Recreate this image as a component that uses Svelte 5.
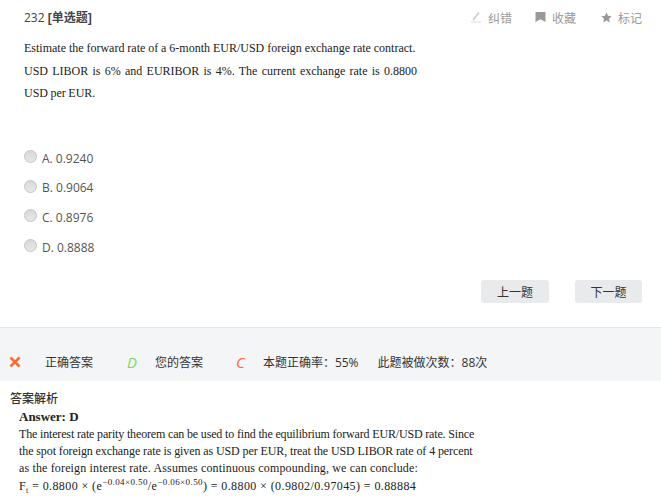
<script>
	const options = ['A. 0.9240', 'B. 0.9064', 'C. 0.8976', 'D. 0.8888'];
</script>

<div class="page">
	<div class="head">
		<div class="qno">232 <b>[单选题]</b></div>
		<div class="tools">
			<span class="tool">
				<svg width="12" height="12" viewBox="0 0 12 12"><path d="M1 11h10" stroke="#ddd" stroke-width="1"/><path d="M3 9l6-7.5" stroke="#ccc" stroke-width="1.6"/></svg>
				纠错
			</span>
			<span class="tool">
				<svg width="11" height="12" viewBox="0 0 11 12"><path d="M0.5 1h10v10L5.5 8.2 0.5 11z" fill="#999"/></svg>
				收藏
			</span>
			<span class="tool">
				<svg width="11" height="11" viewBox="0 0 24 24"><path d="M12 1l3.4 7.3 7.9 1-5.8 5.5 1.5 7.9L12 18.8l-7 3.9 1.5-7.9L.7 9.3l7.9-1z" fill="#999"/></svg>
				标记
			</span>
		</div>
	</div>

	<div class="stem">
		<div class="s1">Estimate the forward rate of a 6-month EUR/USD foreign exchange rate contract.</div>
		<div class="s2">USD LIBOR is 6% and EURIBOR is 4%. The current exchange rate is 0.8800</div>
		<div class="s3">USD per EUR.</div>
	</div>

	<ul class="options">
		{#each options as opt}
			<li><span class="radio"></span>{opt}</li>
		{/each}
	</ul>

	<div class="nav">
		<button type="button">上一题</button>
		<button type="button">下一题</button>
	</div>

	<div class="result">
		<svg class="cross" width="12" height="12" viewBox="0 0 12 12"><path d="M1.5 1.5l9 9M10.5 1.5l-9 9" stroke="#ff6a33" stroke-width="2.6"/></svg>
		<span class="l1">正确答案</span>
		<i class="right">D</i>
		<span class="l2">您的答案</span>
		<i class="wrong">C</i>
		<span class="l3">本题正确率：55%</span>
		<span class="l4">此题被做次数：88次</span>
	</div>

	<div class="analysis">
		<h4>答案解析</h4>
		<div class="body">
			<div class="answer">Answer: D</div>
			<div class="b1">The interest rate parity theorem can be used to find the equilibrium forward EUR/USD rate. Since</div>
			<div class="b2">the spot foreign exchange rate is given as USD per EUR, treat the USD LIBOR rate of 4 percent</div>
			<div class="b3">as the foreign interest rate. Assumes continuous compounding, we can conclude:</div>
			<div class="formula">F<sub>t</sub> = 0.8800 × (e<sup>−0.04×0.50</sup>/e<sup>−0.06×0.50</sup>) = 0.8800 × (0.9802/0.97045) = 0.88884</div>
		</div>
	</div>
</div>

<style>
	:global(body) {
		margin: 0;
		background: #fff;
		overflow: hidden;
	}

	.page {
		width: 661px;
		height: 502px;
		overflow: hidden;
		font-family: 'Liberation Sans', 'Noto Sans CJK SC', sans-serif;
		color: #333;
		font-size: 12px;
	}

	.head {
		display: flex;
		justify-content: space-between;
		align-items: center;
		height: 20px;
		padding: 7px 19px 0 24px;
	}

	.qno {
		font-family: 'Open Sans', 'Noto Sans CJK SC', sans-serif;
		color: #444;
	}

	.qno b {
		font-family: 'Liberation Sans', 'Noto Sans CJK SC', sans-serif;
		font-weight: bold;
	}

	.tools {
		display: flex;
		gap: 23px;
		color: #999;
	}

	.tool {
		display: flex;
		align-items: center;
		gap: 6px;
	}

	.tool:last-child {
		margin-left: 2px;
	}

	.stem {
		margin: 10px 0 0 24px;
		font-family: 'Liberation Serif', serif;
		font-size: 12px;
		line-height: 22.5px;
		color: #222;
		white-space: nowrap;
	}

	.s1 {
		word-spacing: -0.1px;
	}

	.s2 {
		word-spacing: 1.25px;
	}

	.s3 {
		word-spacing: -0.5px;
	}

	.options {
		list-style: none;
		margin: 39px 0 0;
		padding: 0 0 0 24px;
		font-family: 'Open Sans', 'Noto Sans CJK SC', sans-serif;
		color: #555;
	}

	.options li {
		display: flex;
		align-items: center;
		height: 29.6px;
	}

	.radio {
		width: 11px;
		height: 11px;
		margin: -3px 5px 0 0;
		border-radius: 50%;
		border: 1px solid #c4c4c4;
		background: linear-gradient(#d8d8d8, #e8e8e8);
	}

	.nav {
		display: flex;
		justify-content: flex-end;
		gap: 26px;
		margin-top: 18px;
		padding-right: 19px;
	}

	.nav button {
		width: 68px;
		height: 23px;
		padding: 0;
		border: 0;
		border-radius: 3px;
		background: #e9eaec;
		color: #333;
		font: inherit;
	}

	.nav button:last-child {
		width: 67px;
	}

	.result {
		display: flex;
		align-items: center;
		height: 37px;
		margin-top: 24px;
		padding: 16px 0 0 9px;
		border-top: 1px solid #e5e5e5;
		background: #f4f5f7;
		white-space: nowrap;
		font-family: 'Open Sans', 'Noto Sans CJK SC', sans-serif;
	}

	.result i {
		font-size: 15px;
	}

	.l1 {
		margin-left: 24px;
	}

	.right {
		margin-left: 34px;
		color: #7ed957;
	}

	.l2 {
		margin-left: 18px;
	}

	.wrong {
		margin-left: 33px;
		color: #ff6a33;
	}

	.l3 {
		margin-left: 18px;
	}

	.l4 {
		margin-left: 19px;
	}

	.analysis {
		padding: 10px 0 0 10px;
	}

	h4 {
		margin: 0;
		font-size: 12px;
		font-weight: 500;
		line-height: 17px;
	}

	.body {
		padding-left: 9px;
		font-family: 'Liberation Serif', serif;
		font-size: 12px;
		line-height: 17.3px;
		color: #222;
		white-space: nowrap;
	}

	.answer {
		font-size: 13px;
		font-weight: bold;
		line-height: 19px;
		margin-top: -1px;
	}

	.b1 {
		letter-spacing: -0.16px;
	}

	.b2 {
		letter-spacing: -0.1px;
	}

	.b3 {
		letter-spacing: 0.15px;
	}

	.formula {
		letter-spacing: 0.4px;
		font-size: 12px;
	}

	.formula sup {
		font-size: 9px;
		line-height: 0;
	}

	.formula sub {
		font-size: 8px;
		line-height: 0;
	}
</style>
